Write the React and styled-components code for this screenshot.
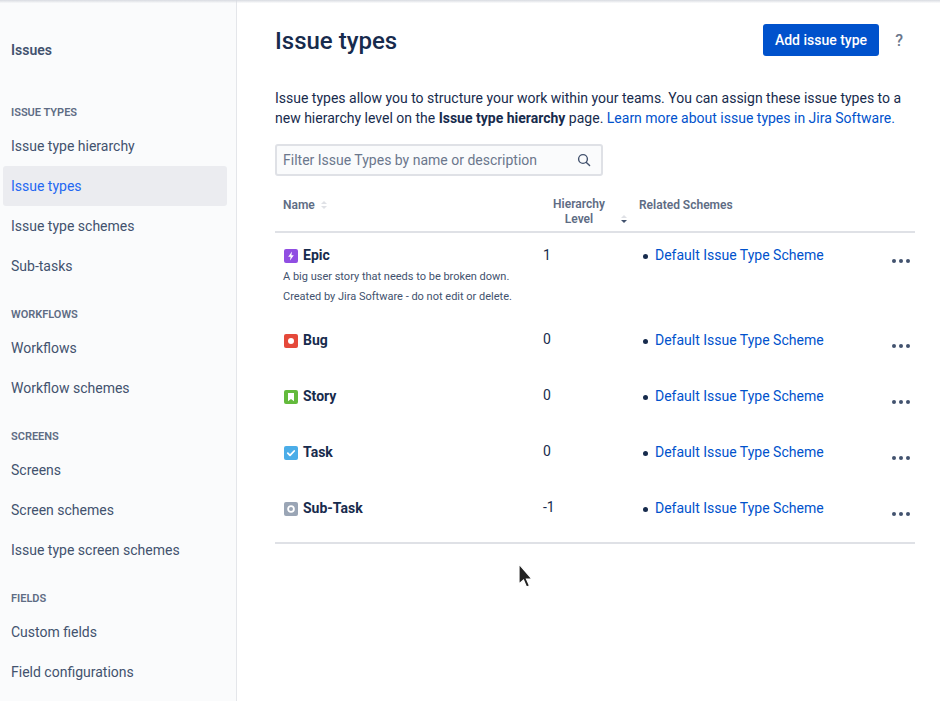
import React from "react";
import styled, { createGlobalStyle } from "styled-components";

const Global = createGlobalStyle`
  html, body { margin: 0; padding: 0; height: 100%; overflow: hidden; background: #fff; }
  body { font-family: Roboto, "Liberation Sans", sans-serif; color: #172B4D; }
  * { box-sizing: border-box; }
`;

const Page = styled.div`
  position: relative;
  display: flex;
  width: 940px;
  height: 701px;
  overflow: hidden;
`;
const TopShadow = styled.div`
  position: absolute;
  inset: 0 0 auto 0;
  height: 3px;
  background: linear-gradient(#d8dbe1, rgba(223, 225, 230, 0.1));
`;
const Sidebar = styled.nav`
  flex: 0 0 237px;
  background: #fafbfc;
  border-right: 1px solid #e4e6ea;
  padding: 40px 9px 0 3px;
`;
const SideTitle = styled.div`
  padding-left: 8px;
  height: 20px;
  font-size: 14px;
  line-height: 20px;
  font-weight: 600;
  color: #42526e;
  margin-bottom: 45px;
`;
const SectionHead = styled.div`
  padding-left: 8px;
  height: 16px;
  margin: ${(p) => (p.$first ? "0" : "21px")} 0 5px;
  font-size: 11px;
  line-height: 16px;
  font-weight: 600;
  color: #5e6c84;
  text-transform: uppercase;
`;
const NavItem = styled.a`
  display: flex;
  align-items: center;
  height: 40px;
  padding-left: 8px;
  border-radius: 3px;
  font-size: 14px;
  color: ${(p) => (p.$active ? "#2468f2" : "#42526e")};
  background: ${(p) => (p.$active ? "#ebecf0" : "transparent")};
`;
const Main = styled.main`
  flex: 1;
  padding: 24px 25px 0 38px;
`;
const Header = styled.header`
  display: flex;
  align-items: center;
  justify-content: space-between;
  height: 32px;
`;
const Title = styled.h1`
  margin: 2px 0 0;
  font-size: 24px;
  line-height: 32px;
  font-weight: 500;
  color: #172b4d;
`;
const Actions = styled.div`
  display: flex;
  align-items: center;
`;
const PrimaryButton = styled.button`
  width: 116px;
  height: 32px;
  border: 0;
  border-radius: 3px;
  background: #0052cc;
  color: #fff;
  font-family: inherit;
  font-size: 14px;
  font-weight: 500;
  padding: 0;
`;
const Help = styled.span`
  width: 36px;
  text-align: right;
  padding-right: 12px;
  font-size: 16px;
  font-weight: 500;
  color: #6b778c;
`;
const Intro = styled.p`
  margin: 32px 0 0;
  font-size: 14px;
  line-height: 20px;
  color: #172b4d;
  b { font-weight: 700; }
  a { color: #0052cc; }
`;
const Search = styled.div`
  display: flex;
  align-items: center;
  justify-content: space-between;
  width: 328px;
  height: 32px;
  margin-top: 16px;
  padding: 0 10px 0 6px;
  border: 2px solid #dfe1e6;
  border-radius: 3px;
  background: #fafbfc;
  font-size: 14px;
  color: #6b778c;
`;
const Row = styled.div`
  display: grid;
  grid-template-columns: 268px 96px 1fr 24px;
`;
const HeadRow = styled(Row)`
  margin-top: 14px;
  border-bottom: 2px solid #dfe1e6;
  height: 43px;
  font-size: 12px;
  line-height: 14px;
  font-weight: 600;
  color: #5e6c84;
`;
const HeadName = styled.div`
  padding: 8px 0 0 8px;
  display: flex;
  align-items: flex-start;
  gap: 6px;
`;
const HeadLevel = styled.div`
  position: relative;
  padding: 7px 24px 0 0;
  line-height: 15px;
  text-align: center;
`;
const HeadScheme = styled.div`
  padding-top: 8px;
`;
const SortSlot = styled.span`
  position: absolute;
  right: 12px;
  top: 25px;
  display: flex;
`;
const BodyRow = styled(Row)`
  height: ${(p) => p.$height}px;
  padding-top: 12px;
`;
const NameCell = styled.div`
  padding-left: 9px;
`;
const NameLine = styled.div`
  display: flex;
  align-items: center;
  gap: 5px;
  height: 20px;
  margin-bottom: 2px;
  font-size: 14px;
  font-weight: 700;
  color: #172b4d;
`;
const IconBox = styled.span`
  display: flex;
  margin-top: 2px;
`;
const Desc = styled.div`
  margin-left: -1px;
  font-size: 11px;
  line-height: 20px;
  color: #42526e;
`;
const LevelCell = styled.div`
  margin-top: ${(p) => (p.$lift ? "-1px" : "0")};
  font-size: 14px;
  line-height: 20px;
  color: #172b4d;
`;
const SchemeCell = styled.div`
  display: flex;
  align-items: center;
  height: 20px;
  font-size: 14px;
  line-height: 20px;
  a { color: #0052cc; }
`;
const Bullet = styled.span`
  width: 5px;
  height: 5px;
  margin: 2px 7px 0 4px;
  border-radius: 50%;
  background: #172b4d;
`;
const DotsCell = styled.div`
  display: flex;
  align-items: flex-start;
  padding-top: 11px;
  margin-left: -2px;
`;
const Bottom = styled.div`
  height: 2px;
  background: #dfe1e6;
`;
const Cursor = styled.svg`
  position: absolute;
  left: 516px;
  top: 562px;
`;

const Sq = ({ c, children }) => (
  <IconBox>
    <svg width="14" height="14" viewBox="0 0 14 14">
      <rect width="14" height="14" rx="2" fill={c} />
      {children}
    </svg>
  </IconBox>
);

const icons = {
  Epic: (
    <Sq c="#904ee2">
      <path d="M8 2.6 4.2 7.8h2.4L6 11.4l3.8-5.2H7.4z" fill="#fff" />
    </Sq>
  ),
  Bug: (
    <Sq c="#e5493a">
      <circle cx="7" cy="7" r="3" fill="#fff" />
    </Sq>
  ),
  Story: (
    <Sq c="#63ba3c">
      <path d="M4 3h6v8.2L7 9l-3 2.2z" fill="#fff" />
    </Sq>
  ),
  Task: (
    <Sq c="#4bade8">
      <path d="m3.8 7.2 2.2 2.2 4.2-4.4" fill="none" stroke="#fff" strokeWidth="1.8" strokeLinecap="round" strokeLinejoin="round" />
    </Sq>
  ),
  "Sub-Task": (
    <Sq c="#9aa5b5">
      <circle cx="7" cy="7" r="2.9" fill="none" stroke="#fff" strokeWidth="1.8" />
    </Sq>
  ),
};

const Sort = ({ active }) => (
  <svg width="6" height="8" viewBox="0 0 6 8">
    <path d="M3 0 6 3H0z" fill="#dfe1e6" />
    <path d="M3 8 0 5h6z" fill={active ? "#42526e" : "#dfe1e6"} />
  </svg>
);

const Dots = () => (
  <svg width="24" height="10" viewBox="0 0 24 10">
    <circle cx="5" cy="5" r="2" fill="#42526e" />
    <circle cx="12" cy="5" r="2" fill="#42526e" />
    <circle cx="19" cy="5" r="2" fill="#42526e" />
  </svg>
);

const nav = [
  ["Issue types", ["Issue type hierarchy", "Issue types", "Issue type schemes", "Sub-tasks"]],
  ["Workflows", ["Workflows", "Workflow schemes"]],
  ["Screens", ["Screens", "Screen schemes", "Issue type screen schemes"]],
  ["Fields", ["Custom fields", "Field configurations"]],
];

const rows = [
  { name: "Epic", level: "1", height: 85, desc: ["A big user story that needs to be broken down.", "Created by Jira Software - do not edit or delete."] },
  { name: "Bug", level: "0", height: 56 },
  { name: "Story", level: "0", height: 56 },
  { name: "Task", level: "0", height: 56 },
  { name: "Sub-Task", level: "-1", height: 56 },
];

export default function App() {
  return (
    <Page>
      <Global />
      <Sidebar>
        <SideTitle>Issues</SideTitle>
        {nav.map(([head, items], i) => (
          <section key={head}>
            <SectionHead $first={i === 0}>{head}</SectionHead>
            {items.map((it) => (
              <NavItem key={it} $active={it === "Issue types"}>{it}</NavItem>
            ))}
          </section>
        ))}
      </Sidebar>
      <Main>
        <Header>
          <Title>Issue types</Title>
          <Actions>
            <PrimaryButton>Add issue type</PrimaryButton>
            <Help>?</Help>
          </Actions>
        </Header>
        <Intro>
          Issue types allow you to structure your work within your teams. You can assign these issue types to a new hierarchy level on the <b>Issue type hierarchy</b> page. <a>Learn more about issue types in Jira Software.</a>
        </Intro>
        <Search>
          <span>Filter Issue Types by name or description</span>
          <svg width="14" height="14" viewBox="0 0 14 14" fill="none" stroke="#42526e" strokeWidth="1.4" strokeLinecap="round">
            <circle cx="6" cy="6" r="4.4" />
            <path d="m9.4 9.4 3.2 3.2" />
          </svg>
        </Search>
        <HeadRow>
          <HeadName>
            <span>Name</span>
            <span><Sort /></span>
          </HeadName>
          <HeadLevel>
            Hierarchy<br />Level
            <SortSlot><Sort active /></SortSlot>
          </HeadLevel>
          <HeadScheme>Related Schemes</HeadScheme>
          <span />
        </HeadRow>
        {rows.map((r) => (
          <BodyRow key={r.name} $height={r.height}>
            <NameCell>
              <NameLine>{icons[r.name]}{r.name}</NameLine>
              {r.desc && r.desc.map((d) => <Desc key={d}>{d}</Desc>)}
            </NameCell>
            <LevelCell $lift={!r.desc}>{r.level}</LevelCell>
            <SchemeCell>
              <Bullet />
              <a>Default Issue Type Scheme</a>
            </SchemeCell>
            <DotsCell><Dots /></DotsCell>
          </BodyRow>
        ))}
        <Bottom />
      </Main>
      <TopShadow />
      <Cursor width="18" height="28" viewBox="0 0 18 28">
        <path d="M3 2v20l4.5-4 3 7 3-1.3-3-6.7H16z" fill="#222" stroke="#fff" strokeWidth="1.2" />
      </Cursor>
    </Page>
  );
}
